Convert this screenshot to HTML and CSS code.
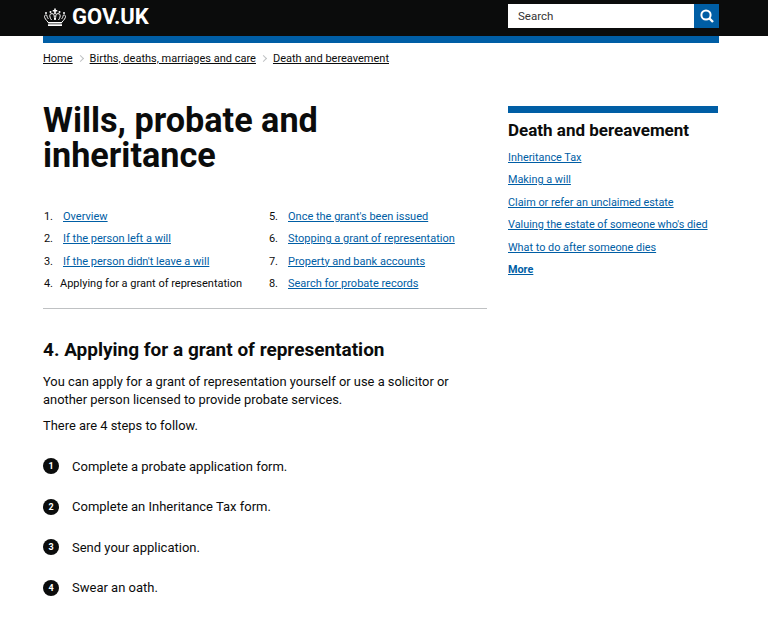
FILE: index.html
```html
<!DOCTYPE html>
<html lang="en">
<head>
<meta charset="utf-8">
<title>Wills, probate and inheritance - GOV.UK</title>
<link rel="stylesheet" href="styles.css">
</head>
<body>
<header class="site-header">
  <div class="wrap header-inner">
    <a class="logo" href="#">
      <svg class="crown" viewBox="0 0 24 18" width="24" height="18" aria-hidden="true">
        <g fill="none" stroke="#fff" stroke-width="1">
          <path d="M5 14c-2-2-3.500-4-3.500-5.500C1.500 7 3 6.500 4 7.500c0 1.500.5 2.500 1.500 3.500"/>
          <path d="M19 14c2-2 3.500-4 3.500-5.500C22.500 7 21 6.500 20 7.500c0 1.500-.5 2.500-1.500 3.500"/>
          <path d="M8.500 12C7 10 6.500 8 7 6.500c1-1.200 3-1 4 0 .3 2 .5 4 .7 5.500"/>
          <path d="M15.500 12c1.500-2 2-4 1.500-5.500-1-1.200-3-1-4 0-.3 2-.5 4-.7 5.500"/>
        </g>
        <path fill="#fff" d="M11.200.5h1.600v1.500h1.500v1.500h-1.500V6h-1.600V3.500H9.700V2h1.500zM4.500 14h15l-1 1.500h-13zM5 16.200h14V18H5z"/>
        <circle cx="3" cy="5" r="1" fill="#fff"/><circle cx="21" cy="5" r="1" fill="#fff"/>
        <circle cx="7.500" cy="4" r="1" fill="#fff"/><circle cx="16.500" cy="4" r="1" fill="#fff"/>
      </svg>
      <span>GOV.UK</span>
    </a>
    <form class="search">
      <span class="search-input">Search</span>
      <span class="search-btn">
        <svg viewBox="0 0 16 16" width="16" height="16" aria-hidden="true"><circle cx="7" cy="7" r="4.600" fill="none" stroke="#fff" stroke-width="2"/><path d="M10.500 10.500l3.500 3.500" stroke="#fff" stroke-width="2.400"/></svg>
      </span>
    </form>
  </div>
</header>
<div class="wrap">
  <div class="blue-bar"></div>
  <nav class="breadcrumbs">
    <a href="#">Home</a><span class="chev"></span>
    <a href="#">Births, deaths, marriages and care</a><span class="chev"></span>
    <a href="#">Death and bereavement</a>
  </nav>
  <div class="columns">
    <main class="main">
      <h1>Wills, probate and inheritance</h1>
      <nav class="contents">
        <ol class="contents-col">
          <li><span class="num">1.</span><a href="#">Overview</a></li>
          <li><span class="num">2.</span><a href="#">If the person left a will</a></li>
          <li><span class="num">3.</span><a href="#">If the person didn't leave a will</a></li>
          <li class="active"><span class="num">4.</span><span>Applying for a grant of representation</span></li>
        </ol>
        <ol class="contents-col">
          <li><span class="num">5.</span><a href="#">Once the grant's been issued</a></li>
          <li><span class="num">6.</span><a href="#">Stopping a grant of representation</a></li>
          <li><span class="num">7.</span><a href="#">Property and bank accounts</a></li>
          <li><span class="num">8.</span><a href="#">Search for probate records</a></li>
        </ol>
      </nav>
      <h2>4. Applying for a grant of representation</h2>
      <p>You can apply for a grant of representation yourself or use a solicitor or another person licensed to provide probate services.</p>
      <p>There are 4 steps to follow.</p>
      <ol class="steps">
        <li><span class="badge">1</span>Complete a probate application form.</li>
        <li><span class="badge">2</span>Complete an Inheritance Tax form.</li>
        <li><span class="badge">3</span>Send your application.</li>
        <li><span class="badge">4</span>Swear an oath.</li>
      </ol>
    </main>
    <aside class="side">
      <h2 class="side-title">Death and bereavement</h2>
      <ul>
        <li><a href="#">Inheritance Tax</a></li>
        <li><a href="#">Making a will</a></li>
        <li><a href="#">Claim or refer an unclaimed estate</a></li>
        <li><a href="#">Valuing the estate of someone who's died</a></li>
        <li><a href="#">What to do after someone dies</a></li>
        <li><a class="more" href="#">More</a></li>
      </ul>
    </aside>
  </div>
</div>
</body>
</html>
```
FILE: styles.css
```css
* { box-sizing: border-box; }
html, body { margin: 0; padding: 0; }
body { font-family: Roboto, "Noto Sans", sans-serif; color: #0b0c0c; background: #fff; overflow: hidden; height: 624px; }
a { color: #005ea5; }
ol, ul { list-style: none; margin: 0; padding: 0; }
.wrap { width: 676px; margin-left: 43px; }
.site-header { background: #0b0c0c; height: 36px; }
.header-inner { display: flex; justify-content: space-between; align-items: flex-start; }
.logo { display: flex; align-items: center; gap: 5px; height: 33px; color: #fff; font-weight: 700; font-size: 22px; text-decoration: none; }
.search { display: flex; margin-top: 4px; height: 24px; }
.search-input { width: 186px; background: #fff; font-size: 11.500px; line-height: 24px; padding-left: 10px; color: #333; }
.search-btn { width: 25px; background: #005ea5; display: flex; align-items: center; justify-content: center; }
.blue-bar { height: 7px; background: #005ea5; }
.breadcrumbs { display: flex; align-items: center; height: 30px; font-size: 11px; }
.breadcrumbs a { color: #0b0c0c; }
.chev { width: 5px; height: 5px; margin: 0 7px 0 5px; border-top: 1px solid #bfc1c3; border-right: 1px solid #bfc1c3; transform: rotate(45deg); }
.columns { display: flex; justify-content: space-between; }
.main { width: 444px; }
.side { width: 210px; margin-right: 1px; margin-top: 33px; border-top: 7px solid #005ea5; padding-top: 7px; }
h1 { margin: 30px 0 0; font-size: 34.200px; line-height: 35px; font-weight: 700; }
.contents { display: flex; margin-top: 32.500px; padding-bottom: 12.500px; border-bottom: 1px solid #bfc1c3; }
.contents-col { flex: none; width: 225px; font-size: 11px; }
.contents-col + .contents-col { width: 219px; }
.contents-col li { display: flex; height: 22.500px; line-height: 22.500px; }
.num { width: 10px; margin-right: 10px; text-align: right; }
.active .num { margin-right: 7px; }
h2 { margin: 29px 0 0; font-size: 19px; line-height: 24px; font-weight: 700; }
p { margin: 0 0 10px; font-size: 12.900px; line-height: 17.500px; }
h2 + p { margin-top: 11px; margin-bottom: 9px; }
.steps { margin-top: 11.500px; font-size: 13px; }
.steps li { display: flex; align-items: center; height: 40.500px; }
.badge { flex: none; width: 16px; height: 16px; margin-right: 13px; border-radius: 50%; background: #0b0c0c; color: #fff; font-size: 9px; font-weight: 700; line-height: 16px; text-align: center; }
.side-title { margin: 0; font-size: 17px; line-height: 20px; }
.side ul { margin-top: 6.500px; font-size: 10.850px; }
.side li { height: 22.500px; line-height: 22.500px; }
.more { font-weight: 700; }
```
